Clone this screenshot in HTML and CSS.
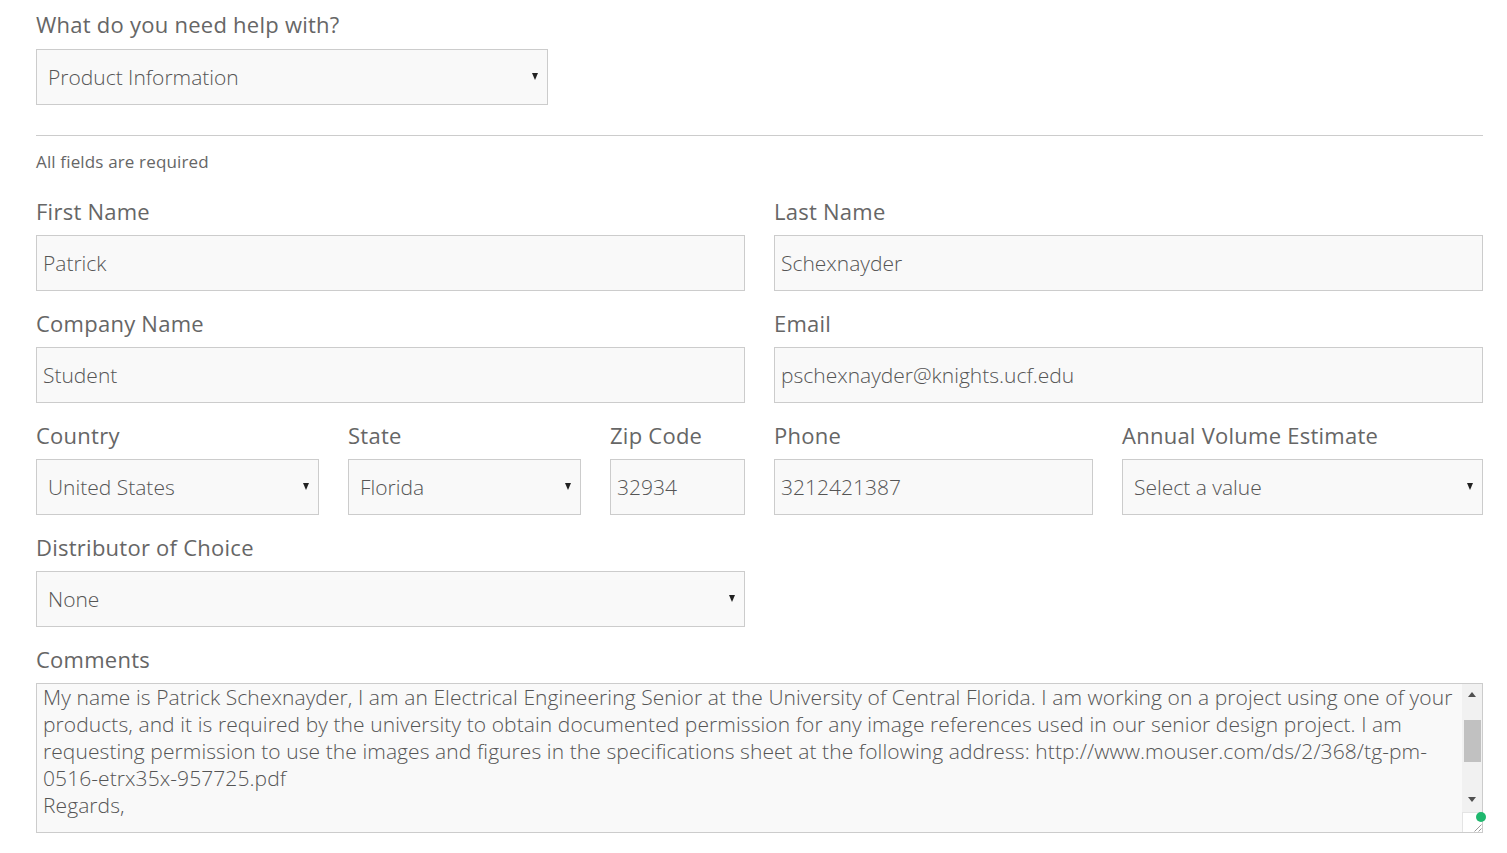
FILE: index.html
```html
<!DOCTYPE html>
<html lang="en">
<head>
<meta charset="utf-8">
<title>Contact</title>
<link rel="stylesheet" href="styles.css">
</head>
<body>
<form class="form">
  <div class="field field-top">
    <label class="label label-top" for="help">What do you need help with?</label>
    <div class="select-wrap select-top">
      <select id="help" class="select"><option>Product Information</option></select>
    </div>
  </div>
  <hr class="divider">
  <p class="note">All fields are required</p>

  <div class="row row-2 row-first">
    <div class="field">
      <label class="label" for="fn">First Name</label>
      <input id="fn" class="input" type="text" value="Patrick">
    </div>
    <div class="field">
      <label class="label" for="ln">Last Name</label>
      <input id="ln" class="input" type="text" value="Schexnayder">
    </div>
  </div>

  <div class="row row-2">
    <div class="field">
      <label class="label" for="co">Company Name</label>
      <input id="co" class="input" type="text" value="Student">
    </div>
    <div class="field">
      <label class="label" for="em">Email</label>
      <input id="em" class="input" type="text" value="pschexnayder@knights.ucf.edu">
    </div>
  </div>

  <div class="row row-5">
    <div class="field">
      <label class="label" for="ct">Country</label>
      <div class="select-wrap"><select id="ct" class="select"><option>United States</option></select></div>
    </div>
    <div class="field">
      <label class="label" for="st">State</label>
      <div class="select-wrap"><select id="st" class="select"><option>Florida</option></select></div>
    </div>
    <div class="field">
      <label class="label" for="zp">Zip Code</label>
      <input id="zp" class="input" type="text" value="32934">
    </div>
    <div class="field">
      <label class="label" for="ph">Phone</label>
      <input id="ph" class="input" type="text" value="3212421387">
    </div>
    <div class="field">
      <label class="label" for="av">Annual Volume Estimate</label>
      <div class="select-wrap"><select id="av" class="select"><option>Select a value</option></select></div>
    </div>
  </div>

  <div class="row row-2">
    <div class="field">
      <label class="label" for="dc">Distributor of Choice</label>
      <div class="select-wrap"><select id="dc" class="select"><option>None</option></select></div>
    </div>
  </div>

  <div class="field">
    <label class="label" for="cm">Comments</label>
    <div class="textarea-wrap">
      <textarea id="cm" class="textarea">Hello,

My name is Patrick Schexnayder, I am an Electrical Engineering Senior at the University of Central Florida. I am working on a project using one of your products, and it is required by the university to obtain documented permission for any image references used in our senior design project. I am requesting permission to use the images and figures in the specifications sheet at the following address: http://www.mouser.com/ds/2/368/tg-pm-0516-etrx35x-957725.pdf
Regards,

Patrick Schexnayder
University of Central Florida
pschexnayder@knights.ucf.edu</textarea>
      <div class="scrollbar" aria-hidden="true">
        <span class="sb-btn sb-up"><span class="tri tri-up"></span></span>
        <span class="sb-track"><span class="sb-thumb"></span></span>
        <span class="sb-btn sb-down"><span class="tri tri-down"></span></span>
      </div>
      <div class="sb-corner" aria-hidden="true">
        <svg width="20" height="20" viewBox="0 0 20 20">
          <path d="M18.5 11.5 L11.5 18.5 M18.5 15.5 L15.5 18.5" stroke="#9a9a9a" stroke-width="1" fill="none"/>
        </svg>
      </div>
      <span class="status-dot"></span>
    </div>
  </div>
</form>
<script src="script.js"></script>
</body>
</html>
```
FILE: styles.css
```css
* { box-sizing: border-box; }
html, body { margin: 0; padding: 0; background: #fff; }
body {
  font-family: "Open Sans", "Liberation Sans", sans-serif;
  color: #666;
}
.form {
  width: 1447px;
  margin-left: 36px;
  padding-top: 9px;
}
.field { display: flex; flex-direction: column; margin-top: 17px; }
.row .field { margin-top: 0; }
.row { margin-top: 17px; }
.row-first { margin-top: 23px; }
.field-top { margin-top: 0; }
.label {
  font-size: 22px;
  line-height: 31px;
  letter-spacing: 0.25px;
  font-weight: 400;
  color: #666;
  margin-bottom: 8px;
}
.label-top { margin-bottom: 9px; }
.input, .select, .textarea {
  font-family: "Open Sans", "Liberation Sans", sans-serif;
  font-weight: 300;
  font-size: 21px;
  color: #555;
  background: #f9f9f9;
  border: 1px solid #ccc;
  border-radius: 0;
  outline: none;
}
.input {
  height: 56px;
  width: 100%;
  padding: 0 6px;
}
.select-wrap { position: relative; }
.select-top { width: 512px; }
.select {
  appearance: none;
  -webkit-appearance: none;
  height: 56px;
  width: 100%;
  padding: 0 30px 0 11px;
}
.select-wrap::after {
  content: "";
  position: absolute;
  right: 10px;
  top: 24px;
  border-left: 3.5px solid transparent;
  border-right: 3.5px solid transparent;
  border-top: 7px solid #222;
  pointer-events: none;
}
.divider {
  border: 0;
  border-top: 1px solid #ccc;
  margin: 30px 0 0;
}
.note {
  font-size: 17px;
  line-height: 22px;
  letter-spacing: 0.15px;
  margin: 15px 0 0;
  color: #666;
}
.row { display: grid; column-gap: 29px; }
.row-2 { grid-template-columns: 709px 709px; }
.row-5 { grid-template-columns: 283px 233px 135px 319px 361px; }
.textarea-wrap { position: relative; }
.textarea {
  display: block;
  width: 100%;
  height: 150px;
  padding: 6px 22px 6px 6px;
  line-height: 27px;
  letter-spacing: 0.08px;
  resize: none;
  overflow: hidden;
}
.scrollbar {
  position: absolute;
  top: 1px;
  right: 1px;
  bottom: 21px;
  width: 20px;
  display: flex;
  flex-direction: column;
  background: #f1f1f1;
}
.sb-btn {
  height: 20px;
  flex: none;
  display: flex;
  align-items: center;
  justify-content: center;
}
.tri {
  width: 0;
  height: 0;
  border-left: 4px solid transparent;
  border-right: 4px solid transparent;
}
.tri-up { border-bottom: 5px solid #505050; margin-top: 1px; }
.tri-down { border-top: 5px solid #505050; margin-top: -5px; }
.sb-track {
  flex: 1;
  display: flex;
  flex-direction: column;
  padding: 16px 1px 0 2px;
}
.sb-thumb {
  height: 42px;
  background: #c1c1c1;
}
.sb-corner {
  position: absolute;
  right: 1px;
  bottom: 1px;
  width: 20px;
  height: 20px;
  background: #fff;
  border-left: 1px solid #e4e4e4;
  border-top: 1px solid #e4e4e4;
}
.sb-corner svg { display: block; position: absolute; right: -1px; bottom: -1px; }
.status-dot {
  position: absolute;
  right: -3px;
  bottom: 11px;
  width: 10px;
  height: 10px;
  border-radius: 50%;
  background: #1fb86e;
}
```
FILE: script.js
```js
document.getElementById('cm').scrollTop = 60;
```
